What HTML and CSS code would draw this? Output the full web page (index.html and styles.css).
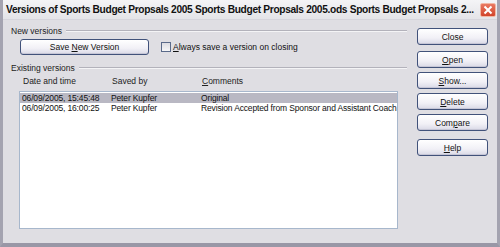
FILE: index.html
```html
<!DOCTYPE html>
<html lang="en">
<head>
  <meta charset="UTF-8">
  <title>Versions</title>
  <link rel="stylesheet" href="styles.css">
</head>
<body>
  <div class="window">
    <div class="titlebar">
      <span class="title">Versions of Sports Budget Propsals 2005 Sports Budget Propsals 2005.ods Sports Budget Propsals 2...</span>
      <span class="close-x">
        <svg width="10" height="10" viewBox="0 0 10 10"><path d="M1.5 1.5 L8.5 8.5 M8.5 1.5 L1.5 8.5" stroke="#fff" stroke-width="2"/></svg>
      </span>
    </div>

    <div class="dialog">
      <div class="main">
        <div class="group-head"><span>New versions</span><div class="rule"></div></div>
        <div class="save-row">
          <button class="btn btn-save">Save <u>N</u>ew Version</button>
          <label class="check"><span class="box"></span><span><u>A</u>lways save a version on closing</span></label>
        </div>

        <div class="group-head existing"><span>Existing versions</span><div class="rule"></div></div>
        <div class="cols">
          <span class="c-date">Date and time</span>
          <span class="c-name">Saved by</span>
          <span class="c-comm"><u>C</u>omments</span>
        </div>
        <div class="list">
          <div class="row selected">
            <span class="c-date">06/09/2005, 15:45:48</span>
            <span class="c-name">Peter Kupfer</span>
            <span class="c-comm">Original</span>
          </div>
          <div class="row">
            <span class="c-date">06/09/2005, 16:00:25</span>
            <span class="c-name">Peter Kupfer</span>
            <span class="c-comm">Revision Accepted from Sponsor and Assistant Coach</span>
          </div>
        </div>
      </div>

      <div class="side">
        <button class="btn">Close</button>
        <button class="btn gap-top"><u>O</u>pen</button>
        <button class="btn"><u>S</u>how...</button>
        <button class="btn"><u>D</u>elete</button>
        <button class="btn">Com<u>p</u>are</button>
        <button class="btn gap-help"><u>H</u>elp</button>
      </div>
    </div>
  </div>
</body>
</html>
```

FILE: styles.css
```css
body {
  margin: 0;
  font-family: "Liberation Sans", Arial, sans-serif;
  font-size: 8.5px;
  color: #111;
}

.window {
  width: 500px;
  height: 247px;
  box-sizing: border-box;
  background-color: #dfdee3;
  border-left: 3px solid #a4a3b0;
  border-right: 3px solid #a4a3b0;
  border-bottom: 4px solid #9997a6;
}

.titlebar {
  height: 20px;
  display: flex;
  align-items: center;
  justify-content: space-between;
  background: linear-gradient(#f4f4f6, #e4e4e8);
  border-bottom: 1px solid #d6d5dc;
  padding: 0 1px 0 3px;
  box-sizing: border-box;
}

.title {
  font-size: 10.2px;
  font-weight: bold;
  color: #111;
  letter-spacing: -0.33px;
  white-space: nowrap;
}

.close-x {
  flex-shrink: 0;
  width: 16px;
  height: 14px;
  margin-left: 2px;
  display: flex;
  align-items: center;
  justify-content: center;
  background: linear-gradient(#e97a62, #d1432a);
  border: 1px solid #f2b7a4;
  border-radius: 2px;
  box-sizing: border-box;
}

.dialog {
  display: flex;
}

.main {
  width: 404px;
  padding: 5px 0 0 8px;
  box-sizing: border-box;
}

.group-head {
  display: flex;
  align-items: center;
  height: 12px;
  color: #222;
}

.rule {
  flex: 1;
  height: 1px;
  background-color: #b3b2bb;
  border-bottom: 1px solid #f4f4f6;
  margin-left: 4px;
}

.save-row {
  display: flex;
  align-items: center;
  padding: 2px 0 0 9px;
}

.btn {
  font-family: "Liberation Sans", Arial, sans-serif;
  font-size: 8.5px;
  color: #111;
  height: 16px;
  padding: 0;
  border: 1px solid #41527a;
  border-radius: 3px;
  background: linear-gradient(#ffffff, #f1f0f6 60%, #d9d9e6);
  box-shadow: inset 0 -1px 0 #c6c6d6;
}

.btn-save {
  width: 129px;
}

.check {
  display: flex;
  align-items: center;
  margin-left: 12px;
}

.box {
  width: 8px;
  height: 8px;
  border: 1px solid #5a6a8a;
  background: linear-gradient(#dcdce2, #f6f6f8);
  margin-right: 2px;
}

.existing {
  margin-top: 7px;
}

.cols {
  display: flex;
  height: 10px;
  align-items: center;
  margin-top: 2px;
  padding-left: 12px;
  color: #222;
}

.c-date,
.c-name {
  flex-shrink: 0;
  overflow: hidden;
}

.c-date {
  width: 89px;
}

.c-name {
  width: 90px;
}

.list {
  margin: 5px 0 0 8px;
  width: 379px;
  height: 138px;
  box-sizing: border-box;
  background-color: #fff;
  border: 1px solid #a7b7cc;
  padding-top: 1px;
}

.row {
  display: flex;
  height: 10px;
  align-items: center;
  padding-left: 2px;
  white-space: nowrap;
  letter-spacing: -0.15px;
}

.row.selected {
  background-color: #b9b8c3;
}

.side {
  display: flex;
  flex-direction: column;
  padding: 8px 0 0 10px;
}

.side .btn {
  width: 71px;
  height: 17px;
  margin-bottom: 4px;
}

.side .gap-top {
  margin-top: 2px;
}

.side .gap-help {
  margin-top: 4px;
}
```
